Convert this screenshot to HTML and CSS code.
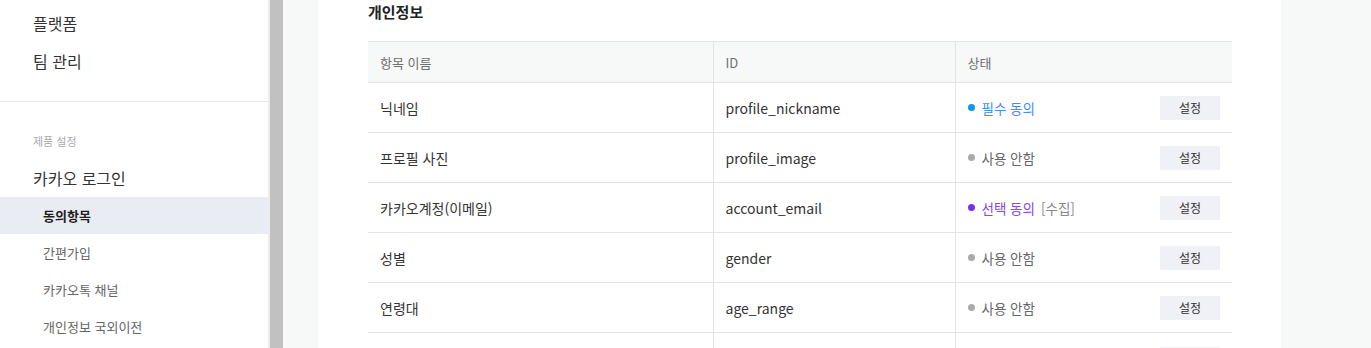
FILE: index.html
```html
<!DOCTYPE html>
<html lang="ko">
<head>
<meta charset="utf-8">
<title>동의항목</title>
<link rel="stylesheet" href="styles.css">
</head>
<body>
<div class="layout">
  <aside class="sidebar">
    <div class="nav-item">플랫폼</div>
    <div class="nav-item">팀 관리</div>
    <div class="divider"></div>
    <div class="group-label">제품 설정</div>
    <div class="nav-item">카카오 로그인</div>
    <div class="sub-item active">동의항목</div>
    <div class="sub-item">간편가입</div>
    <div class="sub-item">카카오톡 채널</div>
    <div class="sub-item">개인정보 국외이전</div>
  </aside>
  <div class="scrollbar"><div class="thumb"></div></div>
  <main class="main">
    <section class="card">
      <h2 class="title">개인정보</h2>
      <table class="consent">
        <colgroup>
          <col class="c-name">
          <col class="c-id">
          <col class="c-state">
        </colgroup>
        <thead>
          <tr><th>항목 이름</th><th>ID</th><th>상태</th></tr>
        </thead>
        <tbody>
          <tr>
            <td>닉네임</td><td>profile_nickname</td>
            <td><div class="state"><span class="dot blue"></span><span class="label blue">필수 동의</span><button class="btn">설정</button></div></td>
          </tr>
          <tr>
            <td>프로필 사진</td><td>profile_image</td>
            <td><div class="state"><span class="dot gray"></span><span class="label gray">사용 안함</span><button class="btn">설정</button></div></td>
          </tr>
          <tr>
            <td>카카오계정(이메일)</td><td>account_email</td>
            <td><div class="state"><span class="dot purple"></span><span class="label purple">선택 동의</span><span class="extra">[수집]</span><button class="btn">설정</button></div></td>
          </tr>
          <tr>
            <td>성별</td><td>gender</td>
            <td><div class="state"><span class="dot gray"></span><span class="label gray">사용 안함</span><button class="btn">설정</button></div></td>
          </tr>
          <tr>
            <td>연령대</td><td>age_range</td>
            <td><div class="state"><span class="dot gray"></span><span class="label gray">사용 안함</span><button class="btn">설정</button></div></td>
          </tr>
          <tr class="peek">
            <td></td><td></td>
            <td><div class="state"><button class="btn" aria-label="설정"></button></div></td>
          </tr>
        </tbody>
      </table>
    </section>
  </main>
</div>
</body>
</html>
```
FILE: styles.css
```css
* { box-sizing: border-box; }
html, body {
  margin: 0;
  padding: 0;
  height: 348px;
  overflow: hidden;
  font-family: "Noto Sans CJK KR", "Noto Sans", sans-serif;
  background: #f7f8f8;
}
.layout {
  display: flex;
  height: 348px;
}
.sidebar {
  width: 270px;
  flex: 0 0 270px;
  background: #fff;
  border-right: 2px solid #ececec;
  padding-top: 4px;
}
.nav-item {
  height: 38px;
  line-height: 38px;
  padding-left: 33px;
  font-size: 16px;
  color: #333;
}
.divider {
  margin-top: 21px;
  height: 1px;
  background: #e6e6e6;
}
.group-label {
  margin-top: 29px;
  height: 20px;
  line-height: 20px;
  padding-left: 33px;
  font-size: 11px;
  color: #aaa;
  margin-bottom: 8px;
}
.sub-item {
  height: 37px;
  line-height: 37px;
  padding-left: 43px;
  font-size: 13px;
  color: #666;
}
.sub-item.active {
  background: #e9ecf3;
  color: #1e1e1e;
  font-weight: 700;
}
.scrollbar {
  width: 15px;
  flex: 0 0 15px;
  background: #fafafa;
}
.scrollbar .thumb {
  width: 13px;
  height: 100%;
  background: #c1c1c1;
}
.main {
  flex: 1;
  padding-left: 33px;
}
.card {
  width: 963px;
  height: 100%;
  background: #fff;
  padding: 0 49px 0 50px;
}
.title {
  margin: 0;
  height: 24px;
  line-height: 24px;
  font-size: 15px;
  font-weight: 700;
  color: #222;
}
.consent {
  margin-top: 17px;
  width: 864px;
  border-collapse: collapse;
  table-layout: fixed;
}
.c-name { width: 345px; }
.c-id { width: 242px; }
.c-state { width: 277px; }
.consent th {
  height: 41px;
  background: #f7f8f8;
  border-top: 1px solid #e4e4e4;
  border-bottom: 1px solid #e4e4e4;
  text-align: left;
  font-weight: 400;
  font-size: 13px;
  color: #6f6f6f;
  padding: 0 12px;
}
.consent td {
  height: 50px;
  border-bottom: 1px solid #e4e4e4;
  font-size: 14px;
  color: #333;
  padding: 0 12px;
}
.consent th + th,
.consent td + td {
  border-left: 1px solid #e4e4e4;
}
.consent .peek td {
  vertical-align: top;
  padding-top: 14px;
}
.state {
  display: flex;
  align-items: center;
}
.dot {
  width: 7px;
  height: 7px;
  border-radius: 50%;
  margin-right: 7px;
}
.dot.blue { background: #0b95f6; }
.dot.gray { background: #aaa; }
.dot.purple { background: #7a2ff5; }
.label { font-size: 13.5px; }
.label.blue { color: #3f8ef5; }
.label.gray { color: #666; }
.label.purple { color: #8447f5; }
.extra {
  margin-left: 6px;
  font-size: 13.5px;
  color: #888;
}
.btn {
  margin-left: auto;
  width: 60px;
  height: 24px;
  border: 0;
  background: #f0f1f6;
  font-family: inherit;
  font-size: 12px;
  color: #333;
  padding: 0;
  cursor: pointer;
}
```
